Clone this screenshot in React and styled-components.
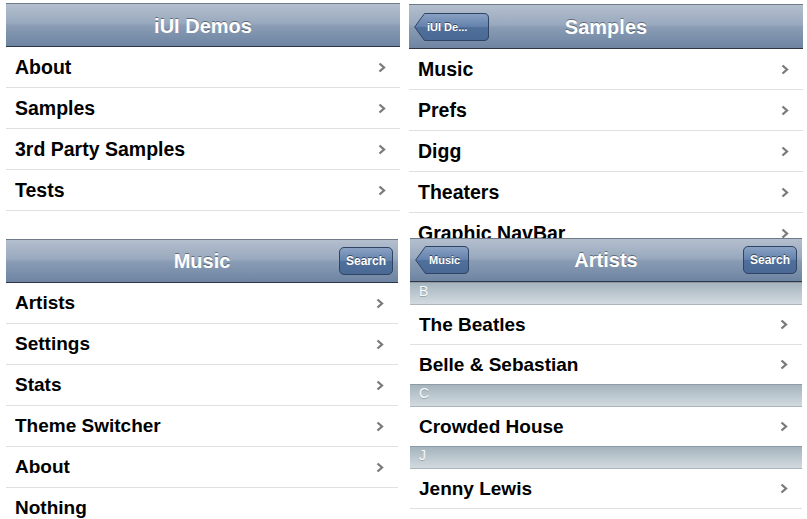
import React from "react";
import styled, { createGlobalStyle } from "styled-components";

const GlobalStyle = createGlobalStyle`
  html, body { margin: 0; padding: 0; background: #fff; }
  body { font-family: "Liberation Sans", Arial, Helvetica, sans-serif; }
`;

const Page = styled.div`
  width: 807px;
  height: 519px;
  overflow: hidden;
  box-sizing: border-box;
  padding: 3px 0 0 6px;
  display: grid;
  grid-template-columns: 394px 394px;
  grid-template-rows: 235px 281px;
  column-gap: 9px;
`;

const Panel = styled.section`
  margin-top: ${(p) => p.$top || 0}px;
  margin-left: ${(p) => p.$left || 0}px;
  width: ${(p) => p.$width || 394}px;
  min-height: 0;
  overflow: hidden;
  background: #fff;
  display: flex;
  flex-direction: column;
`;

const Toolbar = styled.header`
  flex: none;
  height: ${(p) => p.$h || 44}px;
  box-sizing: border-box;
  padding: 0 5px;
  display: grid;
  grid-template-columns: 1fr auto 1fr;
  align-items: center;
  border-top: 1px solid #6f7a88;
  border-bottom: 1px solid #2d3642;
  background: linear-gradient(#b4bfce 0%, #99a9be 45%, #8a9cb4 52%, #6d84a2 100%);
`;

const Title = styled.h1`
  grid-column: 2;
  margin: 0;
  padding-top: ${(p) => p.$shift || 0}px;
  font-size: 20px;
  font-weight: bold;
  color: #fff;
  white-space: nowrap;
  text-shadow: 0 -1px 0 rgba(0, 0, 0, 0.4);
`;

const ToolButton = styled.button`
  grid-column: 3;
  justify-self: end;
  height: 28px;
  box-sizing: border-box;
  padding: 0 6px;
  border: 1px solid #2f4362;
  border-radius: 5px;
  background: linear-gradient(#8aa2c3 0%, #6482ad 48%, #50709c 52%, #4a6894 100%);
  color: #fff;
  font-family: "Liberation Sans", Arial, sans-serif;
  font-size: 12px;
  font-weight: bold;
  text-shadow: 0 -1px 0 rgba(0, 0, 0, 0.5);
`;

const BackButton = styled.button`
  grid-column: 1;
  justify-self: start;
  position: relative;
  width: ${(p) => p.$w}px;
  height: 28px;
  padding: 0 0 0 ${(p) => p.$pad || 13}px;
  border: 0;
  background: none;
  text-align: left;
  color: #fff;
  font-family: "Liberation Sans", Arial, sans-serif;
  font-size: 11px;
  font-weight: bold;
  text-shadow: 0 -1px 0 rgba(0, 0, 0, 0.5);
  white-space: nowrap;

  & > svg {
    position: absolute;
    left: 0;
    top: 0;
  }
  & > span {
    position: relative;
  }
`;

const List = styled.ul`
  margin: 0;
  padding: 0;
  list-style: none;
`;

const Row = styled.li`
  height: ${(p) => p.$h || 41}px;
  box-sizing: border-box;
  border-bottom: 1px solid #e0e0e0;
  padding: 0 14px 0 9px;
  display: flex;
  align-items: center;
  justify-content: space-between;
  font-size: ${(p) => p.$fs || 19.5}px;
  font-weight: bold;
  color: #000;
  white-space: nowrap;
`;

const GroupHeader = styled.li`
  height: 23px;
  box-sizing: border-box;
  margin-top: -1px;
  &:first-child {
    margin-top: 0;
  }
  padding: 0 9px;
  display: flex;
  align-items: flex-start;
  border-top: 1px solid #8f9ba4;
  border-bottom: 1px solid #aab5bc;
  background: linear-gradient(#a5b4be, #d2dadf);
  color: #f6f8f9;
  font-size: 14px;
  line-height: 16px;
  text-shadow: 0 1px 0 rgba(0, 0, 0, 0.2);
`;

const Chevron = () => (
  <svg width="8" height="11" viewBox="0 0 8 11" aria-hidden="true">
    <polyline
      points="1.5,1.5 6,5.5 1.5,9.5"
      fill="none"
      stroke="#7a7a7a"
      strokeWidth="2.3"
      strokeLinejoin="miter"
    />
  </svg>
);

const BackShape = ({ w }) => (
  <svg width={w} height="28" viewBox={`0 0 ${w} 28`} aria-hidden="true">
    <defs>
      <linearGradient id={`bk${w}`} x1="0" y1="0" x2="0" y2="1">
        <stop offset="0" stopColor="#8aa2c3" />
        <stop offset="0.48" stopColor="#6482ad" />
        <stop offset="0.52" stopColor="#50709c" />
        <stop offset="1" stopColor="#4a6894" />
      </linearGradient>
    </defs>
    <path
      d={`M10.5 0.5 H${w - 5} Q${w - 0.5} 0.5 ${w - 0.5} 5 V23 Q${w - 0.5} 27.5 ${w - 5} 27.5 H10.5 L0.7 14 Z`}
      fill={`url(#bk${w})`}
      stroke="#2f4362"
      strokeWidth="1"
    />
  </svg>
);

const Back = ({ label, w, pad }) => (
  <BackButton $w={w} $pad={pad}>
    <BackShape w={w} />
    <span>{label}</span>
  </BackButton>
);

const Item = ({ children, h, fs, arrow = true }) => (
  <Row $h={h} $fs={fs}>
    <span>{children}</span>
    {arrow && <Chevron />}
  </Row>
);

export default function App() {
  return (
    <>
      <GlobalStyle />
      <Page>
        <Panel>
          <Toolbar $h={44}>
            <Title $shift={2}>iUI Demos</Title>
          </Toolbar>
          <List>
            <Item>About</Item>
            <Item>Samples</Item>
            <Item>3rd Party Samples</Item>
            <Item>Tests</Item>
          </List>
        </Panel>

        <Panel $top={1}>
          <Toolbar $h={45}>
            <Back label="iUI De..." w={75} pad={13} />
            <Title $shift={2}>Samples</Title>
          </Toolbar>
          <List>
            <Item>Music</Item>
            <Item>Prefs</Item>
            <Item>Digg</Item>
            <Item>Theaters</Item>
            <Item>Graphic NavBar</Item>
          </List>
        </Panel>

        <Panel $top={1} $width={392}>
          <Toolbar $h={44}>
            <Title>Music</Title>
            <ToolButton>Search</ToolButton>
          </Toolbar>
          <List>
            <Item fs={19}>Artists</Item>
            <Item fs={19}>Settings</Item>
            <Item fs={19}>Stats</Item>
            <Item fs={19}>Theme Switcher</Item>
            <Item fs={19}>About</Item>
            <Item fs={19} arrow={false}>Nothing</Item>
          </List>
        </Panel>

        <Panel $left={1} $width={392}>
          <Toolbar $h={44}>
            <Back label="Music" w={54} pad={14} />
            <Title>Artists</Title>
            <ToolButton>Search</ToolButton>
          </Toolbar>
          <List>
            <GroupHeader>B</GroupHeader>
            <Item h={40} fs={19}>The Beatles</Item>
            <Item h={40} fs={19}>Belle &amp; Sebastian</Item>
            <GroupHeader>C</GroupHeader>
            <Item h={40} fs={19}>Crowded House</Item>
            <GroupHeader>J</GroupHeader>
            <Item h={40} fs={19}>Jenny Lewis</Item>
          </List>
        </Panel>
      </Page>
    </>
  );
}
